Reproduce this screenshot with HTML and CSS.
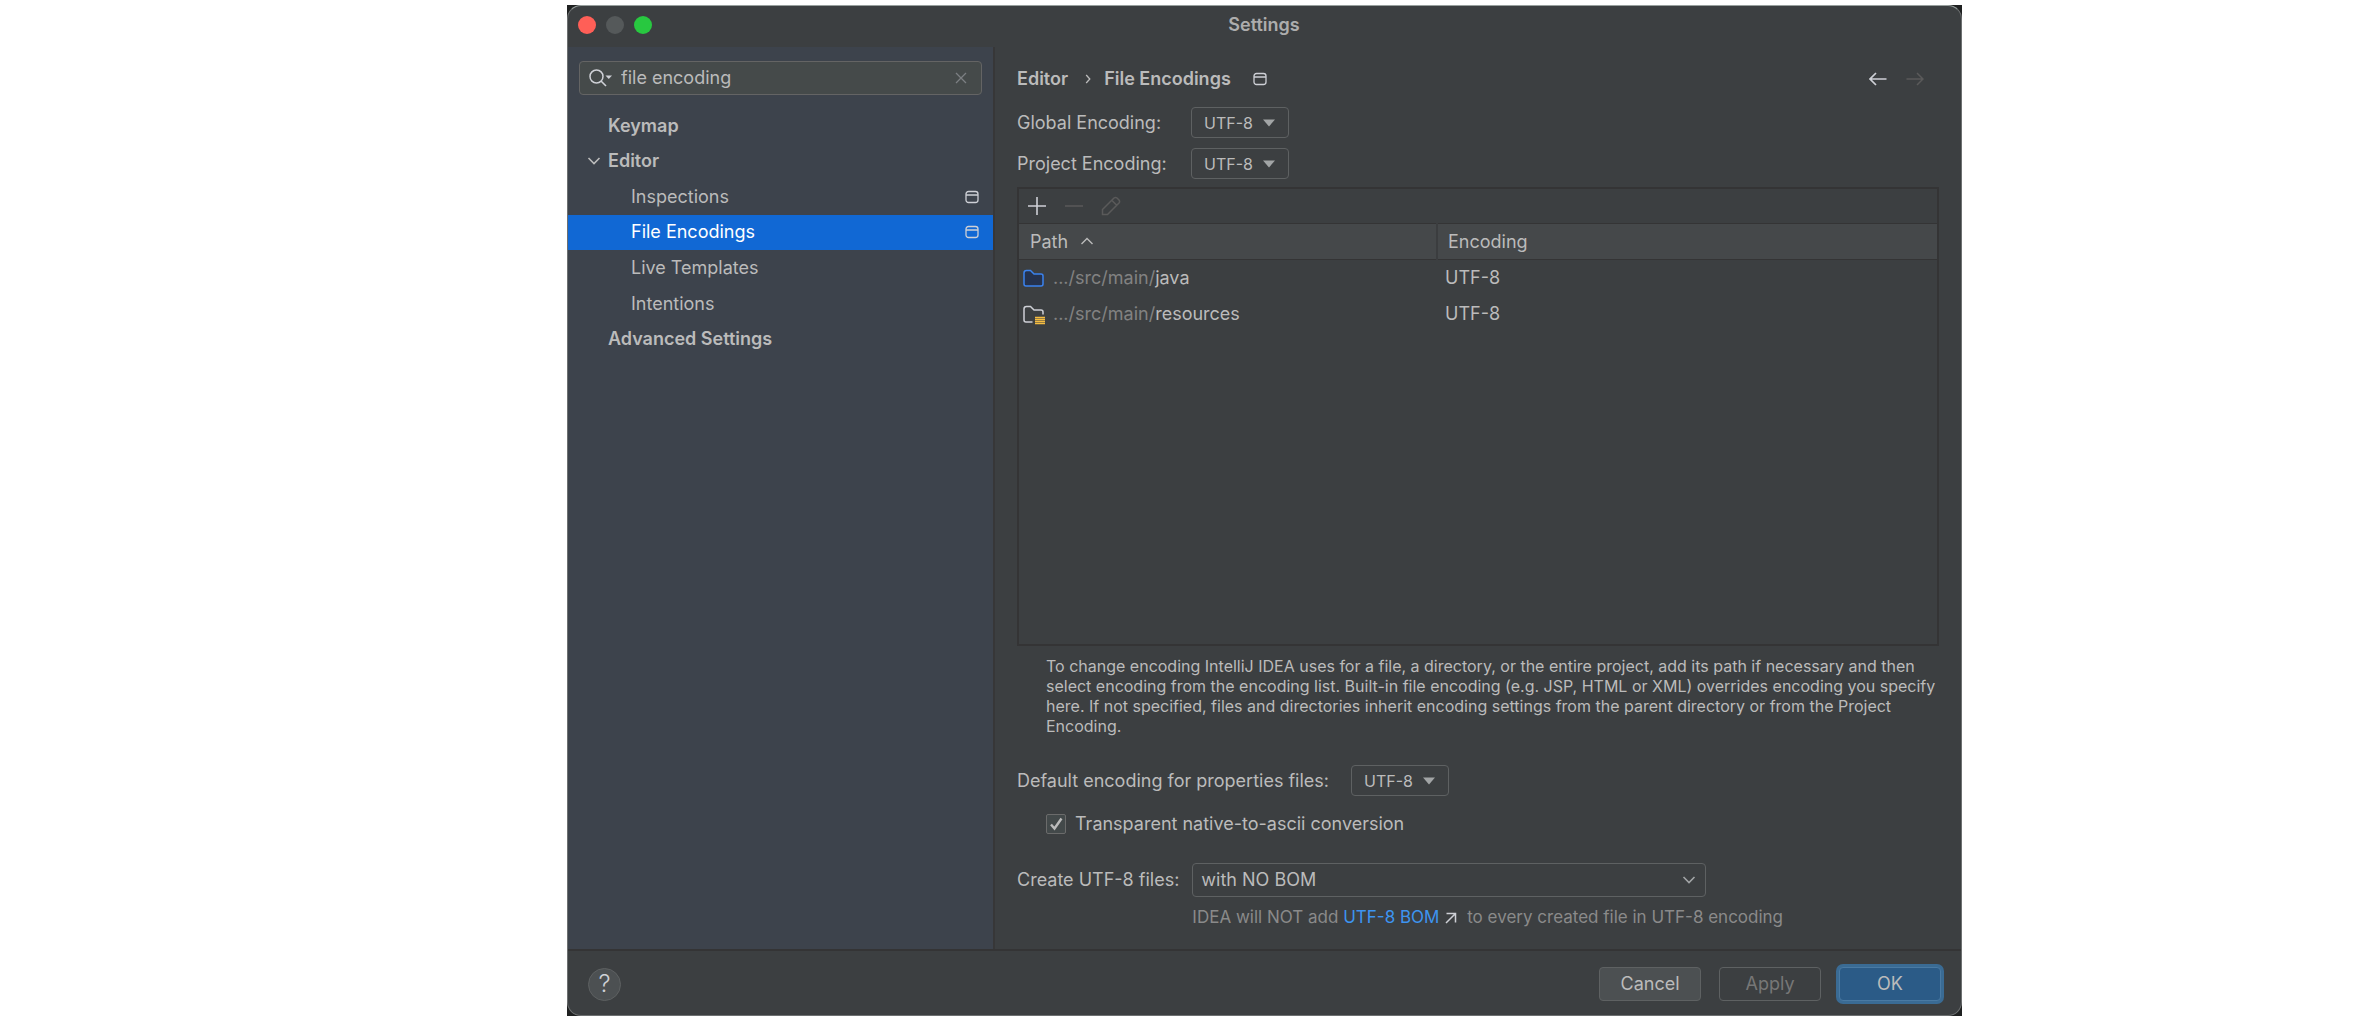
FILE: index.html
```html
<!DOCTYPE html>
<html lang="en">
<head>
<meta charset="utf-8">
<title>Settings</title>
<link rel="stylesheet" href="styles.css">
</head>
<body>
<svg class="defs" aria-hidden="true">
  <symbol id="project-scope" viewBox="0 0 14 14">
    <rect x="1" y="1.5" width="12" height="11" rx="2.5" fill="none" stroke="currentColor" stroke-width="1.3"/>
    <path d="M1 5H13" stroke="currentColor" stroke-width="1.3"/>
  </symbol>
  <symbol id="triangle" viewBox="0 0 14 8"><path d="M1 0.5H13L7 7.5Z" fill="currentColor"/></symbol>
  <symbol id="chevron" viewBox="0 0 14 8"><path d="M1.5 1L7 6.5L12.500 1" fill="none" stroke="currentColor" stroke-width="1.6"/></symbol>
</svg>
<div class="page">
  <div class="backdrop">
    <div class="window">
      <header class="titlebar">
        <div class="lights">
          <button class="light close" aria-label="Close"></button>
          <button class="light minimize" aria-label="Minimize" disabled></button>
          <button class="light zoom" aria-label="Zoom"></button>
        </div>
        <h1 class="title">Settings</h1>
      </header>

      <div class="content">
        <aside class="sidebar">
          <div class="search">
            <svg class="search-icon" viewBox="0 0 24 20" aria-hidden="true">
              <circle cx="7.500" cy="8.500" r="6.500" fill="none" stroke="currentColor" stroke-width="1.500"/>
              <path d="M12 13L17 18" stroke="currentColor" stroke-width="1.600"/>
              <path d="M16.500 7.500H23L19.750 11Z" fill="currentColor"/>
            </svg>
            <input class="search-input" type="text" value="file encoding" aria-label="Search settings">
            <button class="clear" aria-label="Clear search">
              <svg viewBox="0 0 12 12"><path d="M1 1L11 11M11 1L1 11" stroke="currentColor" stroke-width="1.300"/></svg>
            </button>
          </div>
          <nav class="tree">
            <a class="node group" href="#">Keymap</a>
            <a class="node group" href="#"><svg class="expander"><use href="#chevron"/></svg>Editor</a>
            <a class="node child" href="#">Inspections<svg class="scope"><use href="#project-scope"/></svg></a>
            <a class="node child selected" href="#">File Encodings<svg class="scope"><use href="#project-scope"/></svg></a>
            <a class="node child" href="#">Live Templates</a>
            <a class="node child" href="#">Intentions</a>
            <a class="node group" href="#">Advanced Settings</a>
          </nav>
        </aside>

        <main class="panel">
          <div class="crumbs">
            <span>Editor</span>
            <svg class="crumb-sep" viewBox="0 0 6 10"><path d="M1.200 1L4.800 5L1.200 9" fill="none" stroke="currentColor" stroke-width="1.300"/></svg>
            <span>File Encodings</span>
            <svg class="scope"><use href="#project-scope"/></svg>
            <div class="history">
              <button class="arrow" aria-label="Back"><svg viewBox="0 0 18 14"><path d="M7 1L1 7L7 13M1 7H17.500" fill="none" stroke="currentColor" stroke-width="1.700"/></svg></button>
              <button class="arrow" aria-label="Forward" disabled><svg viewBox="0 0 18 14"><path d="M11 1L17 7L11 13M17 7H0.500" fill="none" stroke="currentColor" stroke-width="1.500"/></svg></button>
            </div>
          </div>

          <div class="encodings">
            <label for="global">Global Encoding:</label>
            <div class="combo"><select id="global"><option>UTF-8</option></select><svg><use href="#triangle"/></svg></div>
            <label for="project">Project Encoding:</label>
            <div class="combo"><select id="project"><option>UTF-8</option></select><svg><use href="#triangle"/></svg></div>
          </div>

          <section class="paths">
            <div class="toolbar">
              <button class="tool" aria-label="Add"><svg viewBox="0 0 20 20"><path d="M10 1V19M1 10H19" stroke="currentColor" stroke-width="1.600"/></svg></button>
              <button class="tool" aria-label="Remove" disabled><svg viewBox="0 0 20 20"><path d="M1 10H19" stroke="currentColor" stroke-width="1.600"/></svg></button>
              <button class="tool" aria-label="Edit" disabled><svg viewBox="0 0 20 20"><path d="M1.500 18.500V13.500L13 2Q14.500 0.800 16 2L18 4Q19.200 5.500 18 7L6.500 18.500ZM11 4.500L15.500 9" fill="none" stroke="currentColor" stroke-width="1.500"/></svg></button>
            </div>
            <table class="table">
              <colgroup><col class="col-path"><col></colgroup>
              <thead>
                <tr>
                  <th scope="col">Path<svg class="sort" viewBox="0 0 14 8"><path d="M1.500 7L7 1.500L12.500 7" fill="none" stroke="currentColor" stroke-width="1.400"/></svg></th>
                  <th scope="col">Encoding</th>
                </tr>
              </thead>
              <tbody>
                <tr>
                  <td><svg class="folder" viewBox="0 0 22 20"><path d="M1 4Q1 1.500 3.500 1.500H7.500L11 5H18Q20 5 20 7V15Q20 17 18 17H3Q1 17 1 15Z" fill="#25324d" stroke="#3a82ee" stroke-width="1.500"/></svg><span class="dim">.../src/main/</span>java</td>
                  <td>UTF-8</td>
                </tr>
                <tr>
                  <td><svg class="folder" viewBox="0 0 22 20"><path d="M9.500 17H3Q1 17 1 15V4Q1 1.500 3.500 1.500H7.500L11 5H18Q20 5 20 7V9.500" fill="none" stroke="#ced0d6" stroke-width="1.500"/><path d="M12 12.500H22M12 14.500H22M12 16.500H22M12 18.500H22" stroke="#f5bd42" stroke-width="1.400"/></svg><span class="dim">.../src/main/</span>resources</td>
                  <td>UTF-8</td>
                </tr>
              </tbody>
            </table>
          </section>

          <p class="note">To change encoding IntelliJ IDEA uses for a file, a directory, or the entire project, add its path if necessary and then select encoding from the encoding list. Built-in file encoding (e.g. JSP, HTML or XML) overrides encoding you specify here. If not specified, files and directories inherit encoding settings from the parent directory or from the Project Encoding.</p>

          <div class="properties">
            <label for="properties">Default encoding for properties files:</label>
            <div class="combo"><select id="properties"><option>UTF-8</option></select><svg><use href="#triangle"/></svg></div>
          </div>
          <label class="check">
            <span class="tick">
              <input type="checkbox" checked>
              <svg viewBox="0 0 20 20"><path d="M5 10.500L8.500 14.500L15.500 4.500" fill="none" stroke="currentColor" stroke-width="2.400"/></svg>
            </span>
            Transparent native-to-ascii conversion
          </label>

          <div class="create">
            <label for="create">Create UTF-8 files:</label>
            <div class="combo wide"><select id="create"><option>with NO BOM</option></select><svg><use href="#chevron"/></svg></div>
            <p class="hint">IDEA will NOT add <a href="#">UTF-8 BOM<svg class="external" viewBox="0 0 12 12"><path d="M1.500 1.500H10.500V10.500M10.500 1.500L1 11" fill="none" stroke="currentColor" stroke-width="1.500"/></svg></a> to every created file in UTF-8 encoding</p>
          </div>
        </main>
      </div>

      <footer class="footer">
        <button class="help" aria-label="Help">?</button>
        <button class="button">Cancel</button>
        <button class="button" disabled>Apply</button>
        <button class="button primary">OK</button>
      </footer>
    </div>
  </div>
</div>
</body>
</html>
```

FILE: styles.css
```css
:root {
  --bg: #3c3f41;
  --line: #343435;
  --border: #5e6162;
  --text: #bbbbbb;
  --icon: #ced0d6;
  --disabled: #5a5a5a;
}

* { box-sizing: border-box; }

body {
  margin: 0;
  background: #fff;
  color: var(--text);
  font: 18px/24px Inter, "Liberation Sans", sans-serif;
}

h1, p { margin: 0; }

button, input, select {
  margin: 0;
  padding: 0;
  border: 0;
  background: none;
  color: inherit;
  font: inherit;
}

svg { display: block; flex: none; }

.defs { display: none; }

.page {
  display: grid;
  grid-template-columns: 567fr 1395fr 406fr;
  min-height: 100vh;
  padding-top: 5px;
}

.backdrop {
  display: grid;
  grid-column: 2;
  background: #1f2121;
}

.window {
  display: flex;
  flex-direction: column;
  overflow: hidden;
  border: 1px solid #6d7071;
  border-top-color: #98a09e;
  border-radius: 14px;
  background: var(--bg);
}

/* Title bar */
.titlebar {
  display: grid;
  grid-template-columns: 1fr auto 1fr;
  align-items: center;
  height: 41px;
  padding: 0 11px 3px 10px;
}

.lights { display: flex; gap: 10px; }

.light {
  width: 18px;
  height: 18px;
  border-radius: 50%;
}

.close { background: #ff5f57; }
.minimize { background: #55595a; }
.zoom { background: #28c840; }

.title {
  color: #adadad;
  font-size: 18px;
  font-weight: 600;
}

.content { display: flex; flex: 1; }

/* Sidebar */
.sidebar {
  width: 427px;
  padding-top: 14px;
  border-right: 2px solid #373738;
  background: #3d434c;
}

.search {
  display: flex;
  align-items: center;
  height: 34px;
  margin: 0 11px 13px;
  padding: 0 14px 0 9px;
  border: 1px solid #646464;
  border-radius: 4px;
  background: #454a4a;
}

.search-icon { width: 24px; height: 20px; color: var(--icon); }

.search-input {
  flex: 1;
  min-width: 0;
  margin-left: 8px;
  outline: none;
}

.clear { color: #7c7f83; }
.clear svg { width: 12px; height: 12px; }

.tree {
  display: grid;
  grid-auto-rows: 1fr;
  height: 249px;
}

.node {
  display: flex;
  align-items: center;
  padding-right: 14px;
  color: var(--text);
  text-decoration: none;
}

.group { padding-left: 40px; font-weight: 600; }
.child { padding-left: 63px; }
.selected { background: #1168d4; color: #fff; }

.expander {
  width: 14px;
  height: 8px;
  margin: 0 7px 0 -21px;
}

.scope { width: 14px; height: 14px; color: var(--icon); }
.node .scope { margin-left: auto; }

/* Settings panel */
.panel {
  display: flex;
  flex: 1;
  flex-direction: column;
  min-width: 0;
  padding: 20px 22px 20px;
}

.crumbs {
  display: flex;
  align-items: center;
  margin-bottom: 16px;
  font-weight: 600;
}

.crumb-sep { width: 6px; height: 10px; margin: 0 13px 0 17px; }
.crumbs .scope { margin-left: 22px; }

.history { display: flex; gap: 19px; margin-left: auto; padding-right: 15px; }
.arrow { color: var(--icon); }
.arrow svg { width: 18px; height: 14px; }
.arrow:disabled { color: var(--disabled); }

.encodings {
  display: grid;
  grid-template-columns: 174px auto;
  justify-content: start;
  align-items: center;
  row-gap: 10px;
  margin-bottom: 8px;
}

.combo { display: grid; align-items: center; }
.combo > * { grid-area: 1 / 1; }

.combo select {
  width: 98px;
  height: 31px;
  padding-left: 12px;
  border: 1px solid var(--border);
  border-radius: 4px;
  appearance: none;
  font-size: 16px;
}

.combo svg {
  justify-self: end;
  width: 14px;
  height: 8px;
  margin-right: 13px;
  color: #a2a5a6;
  pointer-events: none;
}

/* Path table */
.paths {
  flex: 1;
  border: 2px solid var(--line);
}

.toolbar { display: flex; gap: 17px; padding: 7px 8px; }
.tool { color: var(--icon); }
.tool svg { width: 20px; height: 20px; }
.tool:disabled { color: var(--disabled); }

.table {
  width: 100%;
  border-collapse: collapse;
  table-layout: fixed;
  text-align: left;
}

.col-path { width: 418px; }

.table th {
  height: 36px;
  padding: 0 11px;
  border-top: 1px solid var(--line);
  border-bottom: 1px solid var(--line);
  background: #45484a;
  font-weight: 400;
}

.table th + th { padding-left: 10px; border-left: 2px solid #3b3d3f; }

.table td {
  height: 36px;
  padding: 0 8px;
}

.table td:first-child { padding-left: 4px; }

.sort, .folder { display: inline-block; }
.sort { width: 14px; height: 8px; margin: 0 0 3px 12px; }
.folder { width: 22px; height: 20px; margin-right: 8px; vertical-align: -5px; }
.dim { color: #828282; }

.note {
  margin: 10px -10px 0 29px;
  font-size: 16px;
  line-height: 20px;
}

.properties {
  display: flex;
  align-items: center;
  gap: 22px;
  margin-top: 29px;
}

.check {
  display: flex;
  align-items: center;
  align-self: start;
  gap: 9px;
  margin: 16px 0 27px 29px;
}

.tick { display: grid; }
.tick > * { grid-area: 1 / 1; width: 20px; height: 20px; }
.tick svg { pointer-events: none; }

.tick input {
  border: 1px solid #6b6b6b;
  border-radius: 2px;
  background: #43494a;
  appearance: none;
}

.create {
  display: grid;
  grid-template-columns: auto minmax(0, 514px);
  justify-content: start;
  align-items: center;
  column-gap: 13px;
  row-gap: 8px;
}

.wide select {
  width: 100%;
  height: 34px;
  padding-left: 8px;
  font-size: 18px;
}

.wide svg { margin-right: 10px; }

.hint {
  grid-column: 2;
  color: #8a8a8a;
  font-size: 17px;
  white-space: nowrap;
}

.hint a { color: #3d94f0; text-decoration: none; }

.external {
  display: inline-block;
  width: 12px;
  height: 12px;
  margin: 0 5px 0 6px;
  color: var(--icon);
  vertical-align: -1px;
}

/* Footer */
.footer {
  display: flex;
  align-items: center;
  gap: 18px;
  height: 66px;
  padding: 2px 20px 0;
  border-top: 2px solid var(--line);
}

.help {
  width: 33px;
  height: 33px;
  margin-right: auto;
  border: 1px solid var(--border);
  border-radius: 50%;
  background: #4c5052;
  color: var(--icon);
  font-size: 24px;
  font-weight: 300;
}

.button {
  width: 102px;
  height: 34px;
  border: 1px solid var(--border);
  border-radius: 4px;
  background: #4c5052;
}

.button:disabled { background: none; color: #777; }

.primary {
  border-color: #4a7aa3;
  background: #2b5b87;
  box-shadow: 0 0 0 3px #3a6b94;
}
```
